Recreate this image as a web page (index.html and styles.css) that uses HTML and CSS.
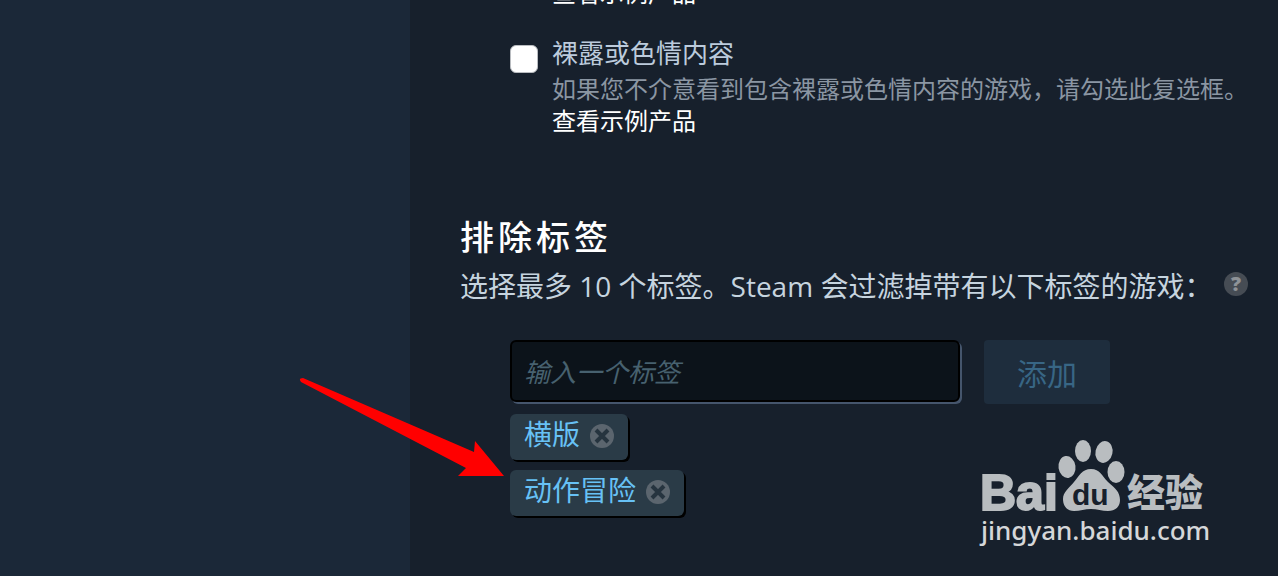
FILE: index.html
```html
<!DOCTYPE html>
<html lang="zh-CN">
  <head>
    <meta charset="UTF-8" />
    <meta name="viewport" content="width=device-width, initial-scale=1" />
    <title>偏好设置</title>
    <link rel="stylesheet" href="styles.css" />
  </head>
  <body>
    <div class="page">
      <aside class="side"></aside>
      <main class="content">
        <div class="options">
          <div class="option">
            <div class="option-text">
              <a href="#" class="sample">查看示例产品</a>
            </div>
          </div>
          <div class="option">
            <input type="checkbox" id="nudity" class="check" />
            <div class="option-text">
              <label for="nudity" class="option-title">裸露或色情内容</label>
              <p class="option-desc">如果您不介意看到包含裸露或色情内容的游戏，请勾选此复选框。</p>
              <a href="#" class="sample">查看示例产品</a>
            </div>
          </div>
        </div>

        <section class="exclude">
          <h2>排除标签</h2>
          <div class="intro">
            <label for="tag">选择最多 10 个标签。Steam 会过滤掉带有以下标签的游戏：</label>
            <span class="help">?</span>
          </div>
          <form class="tag-form">
            <input type="text" id="tag" class="tag-input" placeholder="输入一个标签" />
            <button type="button" class="add">添加</button>
          </form>
          <ul class="tags">
            <li class="tag">
              <span>横版</span>
              <button type="button" class="remove" aria-label="移除横版">
                <svg viewBox="0 0 24 24">
                  <circle cx="12" cy="12" r="12" />
                  <path d="M6 6l12 12M18 6L6 18" />
                </svg>
              </button>
            </li>
            <li class="tag">
              <span>动作冒险</span>
              <button type="button" class="remove" aria-label="移除动作冒险">
                <svg viewBox="0 0 24 24">
                  <circle cx="12" cy="12" r="12" />
                  <path d="M6 6l12 12M18 6L6 18" />
                </svg>
              </button>
            </li>
          </ul>
        </section>
      </main>

      <!-- 红色箭头 -->
      <svg class="arrow" viewBox="0 0 206 100">
        <path d="M4 0L175 74L176 63L205 98H159L167 90L2 4Q-1 0 4 0Z" />
      </svg>

      <!-- 水印 -->
      <svg class="mark" viewBox="0 0 232 112">
        <text class="mark-bai" x="2" y="72">Bai</text>
        <g class="paw">
          <ellipse cx="89" cy="29" rx="8.5" ry="11" transform="rotate(-8 89 29)" />
          <ellipse cx="105" cy="13" rx="8" ry="11" />
          <ellipse cx="126" cy="14" rx="8.5" ry="11" transform="rotate(12 126 14)" />
          <ellipse cx="138" cy="34" rx="8.5" ry="11" />
          <path d="M113 31C122 31 124 38 130 44C137 50 142 54 142 62C142 69 137 73 130 73C124 73 119 71 113 71C107 71 102 73 96 73C89 73 85 68 85 61C85 54 91 50 96 44C101 38 104 31 113 31Z" />
        </g>
        <text class="mark-du" x="94" y="67">du</text>
        <text class="mark-cn" x="149" y="68">经验</text>
        <text class="mark-url" x="3" y="102">jingyan.baidu.com</text>
      </svg>
    </div>
  </body>
</html>
```
FILE: styles.css
```css
* {
  margin: 0;
  padding: 0;
  box-sizing: border-box;
}
body {
  background-color: #17202c;
  color: #c6d4df;
  font-family: "Open Sans", "Noto Sans CJK SC", sans-serif;
  overflow: hidden;
}
a {
  text-decoration: none;
}
.page {
  position: relative;
  display: flex;
  min-height: 100vh;
  overflow: hidden;
}
.side {
  flex: 0 0 410px;
  background-color: #1b2838;
}
.content {
  flex: 1;
  padding: 0 30px 56px 50px;
}

/* 选项 */
.options {
  display: flex;
  flex-direction: column;
  gap: 24px;
  margin-top: -23px;
  padding-left: 50px;
}
.option {
  display: flex;
  gap: 14px;
}
.option:first-child {
  padding-left: 42px;
}
.option-text {
  display: flex;
  flex-direction: column;
  align-items: flex-start;
}
.option-title {
  font-size: 26px;
  line-height: 40px;
  color: #bccbdc;
}
.option-desc,
.sample {
  font-size: 24px;
  line-height: 32px;
  white-space: nowrap;
}
.option-desc {
  color: #8b96a3;
}
.sample {
  color: #fff;
}
.check {
  appearance: none;
  flex: none;
  width: 28px;
  height: 28px;
  margin-top: 12px;
  border: 1px solid #b9bcc0;
  border-radius: 6px;
  background-color: #fff;
}

/* 排除标签 */
.exclude {
  margin-top: 80px;
}
h2 {
  font-size: 34px;
  font-weight: 500;
  line-height: 40px;
  letter-spacing: 4px;
  color: #fff;
}
.intro {
  display: flex;
  align-items: flex-start;
  justify-content: space-between;
  margin-top: 8px;
  font-size: 28px;
  line-height: 42px;
  white-space: nowrap;
}
.help {
  width: 24px;
  height: 24px;
  margin-top: 7px;
  border-radius: 50%;
  background-color: #464c54;
  color: #8e9297;
  font-size: 20px;
  font-weight: 900;
  line-height: 24px;
  text-align: center;
}
.tag-form {
  display: flex;
  align-items: flex-start;
  gap: 24px;
  margin: 33px 0 0 50px;
}
.tag-input {
  width: 450px;
  height: 62px;
  padding: 2px 12px 0;
  border: 2px solid #000;
  border-radius: 6px;
  background-color: #0c131a;
  box-shadow: 2px 2px 0 #45556c;
  color: #c6d4df;
  font-family: inherit;
  font-size: 26px;
}
.tag-input::placeholder {
  color: #47616f;
  font-style: italic;
}
.add {
  width: 126px;
  height: 64px;
  border: none;
  border-radius: 4px;
  background-color: #1e2d3d;
  color: #386685;
  font-family: inherit;
  font-size: 30px;
}
.tags {
  display: flex;
  flex-direction: column;
  align-items: flex-start;
  gap: 10px;
  margin: 10px 0 0 50px;
  list-style: none;
}
.tag {
  display: flex;
  align-items: center;
  gap: 10px;
  padding: 0 14px 6px;
  border-radius: 6px;
  background-color: #2a3b47;
  box-shadow: 2px 2px 0 #000;
  color: #67c1f5;
  font-size: 28px;
  line-height: 40px;
}
.remove {
  width: 24px;
  height: 24px;
  margin-top: 4px;
  border: none;
  background: none;
  cursor: pointer;
}
.remove svg {
  display: block;
}
.remove circle {
  fill: #5b656e;
}
.remove path {
  fill: none;
  stroke: #26343f;
  stroke-width: 4;
}

/* 覆盖在页面上的箭头和水印 */
.arrow {
  position: absolute;
  top: 378px;
  left: 299px;
  width: 206px;
  height: 100px;
  fill: #f00;
}
.mark {
  position: absolute;
  top: 438px;
  right: 68px;
  width: 232px;
  height: 112px;
  fill: #b9bdc0;
}
.mark-bai {
  font: bold 50px "Liberation Sans", sans-serif;
  stroke: #b9bdc0;
  stroke-width: 2px;
}
.mark-du {
  font: bold 30px "Liberation Sans", sans-serif;
  fill: #17202c;
}
.mark-cn {
  font: 900 38px "Noto Sans CJK SC", sans-serif;
}
.mark-url {
  font: 500 26px "Noto Sans", sans-serif;
  fill: #d5d7d9;
}
```
